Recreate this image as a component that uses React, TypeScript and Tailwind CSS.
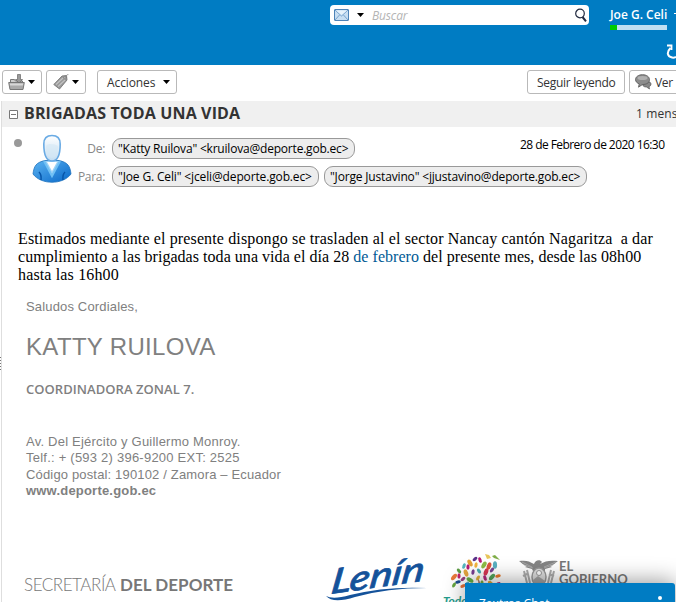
import React from "react";

const ui = "font-['Open_Sans','Noto_Sans',sans-serif]";
const sans = "font-['Liberation_Sans',Arial,sans-serif]";

function Caret() {
  return (
    <svg width="7" height="4" viewBox="0 0 7 4" className="shrink-0">
      <path d="M0 0h7L3.5 4z" fill="#000" />
    </svg>
  );
}

function Envelope() {
  return (
    <svg width="15" height="12" viewBox="0 0 15 12" className="shrink-0">
      <rect x=".5" y=".5" width="14" height="11" rx=".5" fill="#c7def2" stroke="#4d83b8" />
      <path d="M1 1l6.500 6L14 1M1 11l4.500-5M14 11L9.500 6" fill="none" stroke="#5f91c2" strokeWidth=".8" />
      <path d="M2 1.500h11L7.500 6z" fill="#e6f2fb" />
    </svg>
  );
}

function MoveIcon() {
  return (
    <svg width="17" height="17" viewBox="0 0 17 17" className="shrink-0">
      <path d="M2.500 8V5.500h4l1 1.500h7v2" fill="#ccc" stroke="#777" />
      <path d="M.7 8.500h15.600l-1.300 7H2z" fill="#aaa" stroke="#777" />
      <path d="M1.800 9.500h13.400l-.4 2H2.200z" fill="#d8d8d8" />
      <path d="M9.500.5v5H7.500l3.500 3.500 3.500-3.500h-2v-5z" fill="#999" stroke="#666" strokeWidth=".7" />
    </svg>
  );
}

function TagIcon() {
  return (
    <svg width="16" height="16" viewBox="0 0 16 16" className="shrink-0">
      <path d="M.8 10.500L9 2l4.500-.5.5 4.500L6.500 15z" fill="#999" stroke="#777" strokeWidth=".9" />
      <path d="M3 10.500L10 4M5 12.500L12 6" stroke="#c2c2c2" strokeWidth="1.200" />
      <circle cx="12" cy="3.800" r="1" fill="#fff" stroke="#555" strokeWidth=".5" />
      <path d="M12 4C13 1 15 0 15.500 1" fill="none" stroke="#888" strokeWidth=".8" />
    </svg>
  );
}

function ChatIcon() {
  return (
    <svg width="17" height="16" viewBox="0 0 17 16" className="shrink-0">
      <path d="M8 9c2-2 8-2 8 1 0 1.500-1 2.300-2 2.600l.5 2.400-3-2C9 13 7 12 8 9z" fill="#888" stroke="#555" strokeWidth=".7" />
      <path d="M7.500.7c4 0 7 2 7 5s-3 4.800-7 4.800l-4 2.700.7-3.300C2 9 .5 7.500.5 5.700c0-3 3-5 7-5z" fill="#8c8c8c" stroke="#555" strokeWidth=".8" />
      <ellipse cx="7.500" cy="4" rx="5" ry="2" fill="#b0b0b0" />
    </svg>
  );
}

function Avatar() {
  return (
    <svg width="40" height="50" viewBox="0 0 40 50" className="shrink-0">
      <defs>
        <linearGradient id="suit" x1="0" y1="0" x2="1" y2="1">
          <stop offset="0" stopColor="#5cb3f1" />
          <stop offset="1" stopColor="#0868c9" />
        </linearGradient>
        <linearGradient id="face" x1="0" y1="0" x2="0" y2="1">
          <stop offset="0" stopColor="#fff" />
          <stop offset="1" stopColor="#c4ddf1" />
        </linearGradient>
      </defs>
      <path d="M1 40C2 32 4 28.500 13 26.500h14c9 2 11 5.500 12 13.500-8 11-30 11-38 0z" fill="url(#suit)" stroke="#2072bd" strokeWidth=".8" />
      <path d="M12 27h16l-8 14z" fill="#9dd2f7" />
      <path d="M15 28l5 9 5-9z" fill="#fff" />
      <path d="M12 27L20 42l8-15" fill="none" stroke="#6fc0f5" strokeWidth="2" />
      <path d="M9 46c.5-4 0-6-2-8M31 46c-.5-4 0-6 2-8" fill="none" stroke="#0755a8" strokeWidth="1.500" />
      <path d="M11.800 10c0-6 3-8.500 8.200-8.500s8.200 2.500 8.200 8.500c0 9-2 17-8.200 17s-8.200-8-8.200-17z" fill="url(#face)" stroke="#6aabe4" strokeWidth="1.600" />
      <path d="M14 12c2-3 9-2 12 0 0 7-2 12-6 12s-6-5-6-12z" fill="#d4e7f5" opacity=".6" />
    </svg>
  );
}

const chip =
  "flex h-[21px] items-center rounded-[9px] border border-[#999] bg-[#ededed] pl-[5px] whitespace-pre text-[12px] text-black";
const label = "w-[33px] text-right text-[12px] leading-[21px] text-[#888] tracking-[-0.3px]";
const button = "flex h-6 shrink-0 items-center rounded-[3px] border border-[#b9b9b9] bg-white text-[12px] text-[#333] whitespace-nowrap";

const leaves: [number, number, number, string][] = [
  [5, 25, 40, "#e8793a"], [10, 19, -40, "#5c9b43"], [15, 14, 20, "#56b6bd"], [21, 11, -30, "#e5a137"],
  [19, 15, 0, "#b61972"], [27, 13, 10, "#f1b43f"], [35, 13, 30, "#8cbb45"], [9, 30, 80, "#1d4d8f"],
  [14, 27, 50, "#97417f"], [17, 21, -20, "#e4a63e"], [24, 20, 10, "#783d91"], [30, 19, -35, "#46aeb2"],
  [37, 20, 20, "#d63554"], [43, 18, 40, "#7a4493"], [49, 24, 80, "#e9792a"], [43, 25, 40, "#53a45b"],
  [36, 26, -20, "#b3277e"], [29, 26, 30, "#e3b23b"], [21, 28, -60, "#64ad45"], [14, 34, 70, "#e4713b"],
  [49, 32, 60, "#af2878"], [42, 32, -40, "#e6aa3a"], [5, 33, 30, "#65a43f"], [10, 24, 0, "#c32267"],
  [40, 14, 20, "#dd543e"], [33, 31, 0, "#7bae41"], [26, 7, 50, "#5b328a"], [46, 13, 0, "#59afc0"],
  [18, 32, 45, "#59afc0"], [31, 8, -20, "#b61972"],
];

function Tree() {
  return (
    <svg width="56" height="50" viewBox="0 0 56 50" className="shrink-0">
      <path d="M24 50c3-8 3-12-3-17 5 1 6 4 7 8 1-5 2-9 1-15 3 5 2 9 2 14 2-5 6-7 10-8-7 5-9 9-7 18z" fill="#93573f" />
      {leaves.map(([x, y, r, c], i) => (
        <ellipse key={i} cx={x} cy={y} rx={i % 3 ? 1.6 : 2.1} ry={i % 3 ? 2.8 : 3.800} fill={c} transform={`rotate(${r} ${x} ${y})`} />
      ))}
      <path d="M36 2l4 1 2 3-4 1z" fill="#e8c65a" />
      <path d="M43 4l3-1 5 5-6-2z" fill="#7fae48" />
    </svg>
  );
}

function Lenin() {
  return (
    <svg width="110" height="46" viewBox="0 0 110 46" className="shrink-0 overflow-visible">
      <text transform="translate(5 35) rotate(-8) skewX(-16)" fontFamily="Lato, sans-serif" fontSize="34" fontStyle="italic" fontWeight="500" fill="#14529a" stroke="#14529a" strokeWidth=".7" strokeLinejoin="round" textLength="94" lengthAdjust="spacingAndGlyphs">Lenín</text>
      <path d="M1 37q7 4 24-1 36-9 77-7-40 0-72 9-22 7-29-1z" fill="#14529a" />
    </svg>
  );
}

function Arms() {
  return (
    <svg width="40" height="26" viewBox="0 0 40 26" className="shrink-0">
      <path d="M0 3c7-1 10 0 15 3 1-4 6-5 8-2l-2 2c5-3 10-4 18-3-3 2-4 4-8 5l2 1-7 2v2H14l-1-2-7-2 2-1C4 7 3 5 0 3z" fill="#858585" />
      <path d="M3 4l10 5M5 7l9 3M37 4L25 9M34 7l-9 3" stroke="#b5b5b5" strokeWidth=".7" />
      <path d="M5 13l3 12M8 12l3 13M32 12l-3 13M35 13l-3 12M4 18l4-2M30 16l5 2" stroke="#aaa" strokeWidth="2" />
      <ellipse cx="20" cy="19" rx="7" ry="9" fill="#ddd" stroke="#999" strokeWidth="1.500" />
      <circle cx="20" cy="15" r="2.500" fill="#fff" stroke="#999" />
      <path d="M14 22l5-4 7 5v3H15z" fill="#a5a5a5" />
    </svg>
  );
}

export default function App() {
  return (
    <div className={`relative flex h-[602px] w-[676px] flex-col overflow-hidden bg-white ${ui}`}>
      <header className="h-[65px] shrink-0 bg-[#007cc3]">
        <div className="flex h-10 items-start pt-[5px] pl-[330px]">
          <div className="flex h-5 w-[259px] shrink-0 items-center rounded-[4px] bg-white pr-[2px] pl-[4px]">
            <Envelope />
            <span className="ml-2 flex"><Caret /></span>
            <span className="ml-2 pt-px text-[12px] text-[#b5b5b5] italic tracking-[-0.15px]">Buscar</span>
            <svg width="12" height="14" viewBox="0 0 12 14" className="ml-auto">
              <circle cx="5" cy="5.500" r="4.300" fill="none" stroke="#222b40" strokeWidth="1.200" />
              <path d="M7.500 9l3.500 4.300" stroke="#222b40" strokeWidth="2" />
            </svg>
          </div>
          <div className="ml-[21px] w-[57px] shrink-0">
            <div className="h-5 text-[12px] leading-[20px] font-semibold whitespace-nowrap text-white">Joe G. Celi</div>
            <div className="h-[5px] w-[57px] bg-[#bfdff2]"><div className="h-full w-[7px] bg-[#0c0]" /></div>
          </div>
          <div className="mt-2 ml-[7px] h-px w-[2px] bg-white" />
        </div>
        <div className="flex justify-end overflow-hidden pt-[4px]">
          <svg width="10" height="16" viewBox="0 0 10 16">
            <path d="M4.500 4C.5 8 1 12.500 6 13.500c2 .4 3 0 4-.5" fill="none" stroke="#fff" strokeWidth="2" />
            <path d="M1 1.500h4.500V6" fill="none" stroke="#fff" strokeWidth="1.800" />
          </svg>
        </div>
      </header>

      <div className="flex h-9 shrink-0 items-start overflow-hidden pt-[5px] pl-[2px]">
        <div className={`${button} w-10 gap-[3px] pl-[5px]`}><MoveIcon /><Caret /></div>
        <div className={`${button} ml-1 w-10 gap-[3px] pl-[6px]`}><TagIcon /><Caret /></div>
        <div className={`${button} ml-[11px] w-20 justify-between pr-[6px] pl-[9px]`}><span className="pt-px tracking-[-0.1px]">Acciones</span><Caret /></div>
        <div className={`${button} ml-[350px] w-[98px] pt-px pl-[9px] tracking-[-0.3px]`}>Seguir leyendo</div>
        <div className={`${button} ml-1 w-[80px] gap-[3px] pl-[5px]`}><ChatIcon /><span className="pt-px tracking-[-0.3px]">Ver</span></div>
      </div>

      <div className="flex min-h-0 flex-1">
        <div className="flex w-px shrink-0 flex-col gap-[2px] pt-[256px]">
          <i className="h-px bg-[#777]" /><i className="h-px bg-[#777]" /><i className="h-px bg-[#777]" /><i className="h-px bg-[#777]" /><i className="h-px bg-[#777]" />
        </div>
        <main className="flex w-[675px] shrink-0 flex-col border-l border-[#dedede]">
          <div className="flex h-[26px] shrink-0 items-center overflow-hidden bg-[#f0f0f0] pl-[7px] text-[#333]">
            <svg width="9" height="9" viewBox="0 0 9 9" className="shrink-0"><path d="M.5.5h8v8h-8zM2 4.500h5" fill="#fff" stroke="#777" /></svg>
            <h1 className="ml-[6px] w-[300px] shrink-0 pb-[2px] text-[16px] leading-[24px] font-bold whitespace-nowrap tracking-[0.15px]">BRIGADAS TODA UNA VIDA</h1>
            <span className="ml-[312px] shrink-0 pb-px text-[12px] whitespace-nowrap tracking-[0.1px]">1 mensaje</span>
          </div>

          <section className="flex h-[103px] shrink-0 pt-[7px]">
            <div className="mt-[5px] ml-[12px] size-2 shrink-0 rounded-full bg-[#999]" />
            <div className="ml-[10px]"><Avatar /></div>
            <div className="flex flex-col gap-[7px] pt-[4px]">
              <div className="flex"><span className={label}>De:</span>
                <div className={`${chip} ml-[7px] w-[243px]`}><span className="tracking-[-0.2px]">"Katty Ruilova" &lt;kruilova@deporte.gob.ec&gt;</span></div>
              </div>
              <div className="flex"><span className={label}>Para:</span>
                <div className={`${chip} ml-[7px] w-[207px]`}><span className="tracking-[-0.14px]">"Joe G. Celi" &lt;jceli@deporte.gob.ec&gt;</span></div>
                <div className={`${chip} ml-[5px] w-[263px]`}><span className="tracking-[-0.17px]">"Jorge Justavino" &lt;jjustavino@deporte.gob.ec&gt;</span></div>
              </div>
            </div>
            <div className="-ml-[67px] pt-[2px] text-[12px] leading-[18px] whitespace-nowrap text-black tracking-[-0.56px]">28 de Febrero de 2020 16:30</div>
          </section>

          <article className="flex flex-col pl-4">
            <div className="font-['Liberation_Serif',serif] text-[16px] leading-[18px] whitespace-pre text-black">
              <p className="tracking-[0.13px]">Estimados mediante el presente dispongo se trasladen al el sector Nancay cantón Nagaritza  a dar</p>
              <p className="tracking-[0.04px]">cumplimiento a las brigadas toda una vida el día 28 <a className="text-[#005a95]">de febrero</a> del presente mes, desde las 08h00</p>
              <p className="tracking-[0.15px]">hasta las 16h00</p>
            </div>
            <div className={`flex flex-col pl-2 text-[13px] text-[#808080] ${sans}`}>
              <p className="mt-[14px] leading-[18px] tracking-[0.16px]">Saludos Cordiales,</p>
              <p className="mt-[17px] text-[24px] leading-[28px] tracking-[0.33px]">KATTY RUILOVA</p>
              <p className={`mt-[19px] mb-px text-[13px] leading-[18px] font-semibold tracking-[0.05px] ${ui}`}>COORDINADORA ZONAL 7.</p>
              <div className="mt-[35px] leading-[16.500px] whitespace-nowrap">
                <p className="tracking-[0.22px]">Av. Del Ejército y Guillermo Monroy.</p>
                <p className="-mt-px mb-px tracking-[0.23px]">Telf.: + (593 2) 396-9200 EXT: 2525</p>
                <p className="tracking-[0.16px]">Código postal: 190102 / Zamora – Ecuador</p>
                <p className="-mt-px mb-px font-bold tracking-[0.2px]">www.deporte.gob.ec</p>
              </div>
            </div>
            <div className="mt-[52px] flex h-[52px] items-start pl-[6px] whitespace-nowrap">
              <div className="mt-[21px] w-[301px] shrink-0 font-['Lato',sans-serif] text-[17px] leading-[24px] text-[#777]"><span className="font-light tracking-[-0.45px]">SECRETARÍA</span> <b className="tracking-[0.05px]">DEL DEPORTE</b></div>
              <div className="mt-[7px]"><Lenin /></div>
              <div className="ml-[14px] w-[56px]"><Tree /></div>
              <div className="mt-[6px] ml-[14px]"><Arms /></div>
              <div className="mt-[8px] font-['Lato',sans-serif] text-[13px] leading-[13px] font-bold text-[#777]">EL<br />GOBIERNO</div>
            </div>
          </article>
        </main>
      </div>

      <span className="absolute top-[594px] left-[443px] font-['Lato',sans-serif] text-[12px] leading-[14px] font-bold text-[#249c8c] italic">Todo</span>
      <aside className="absolute top-[583px] left-[465px] flex h-9 w-[210px] items-start justify-between rounded-tr-[3px] bg-[#007cc3] pt-[12px] pr-[13px] pl-[14px] text-[12px] leading-[18px] text-white shadow-[0_-2px_22px_rgba(0,0,0,0.4)]">
        <span>Zextras Chat</span>
        <i className="mt-px size-1 rounded-full bg-white" />
      </aside>
    </div>
  );
}
